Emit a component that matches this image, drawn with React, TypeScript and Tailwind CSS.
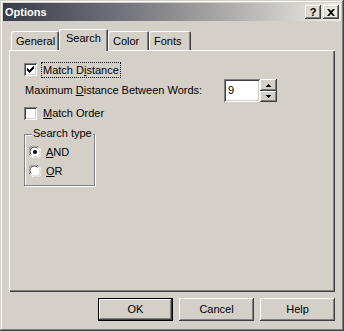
import React from 'react'

const raised =
  'shadow-[inset_-1px_-1px_0_#404040,inset_1px_1px_0_#ffffff,inset_-2px_-2px_0_#808080,inset_2px_2px_0_#d4d0c8]'
const sunken =
  'shadow-[inset_1px_1px_0_#808080,inset_-1px_-1px_0_#ffffff,inset_2px_2px_0_#404040,inset_-2px_-2px_0_#d4d0c8]'

const CheckBox: React.FC<{ checked?: boolean }> = ({ checked }) => (
  <div className={`w-[13px] h-[13px] bg-white shrink-0 flex items-center justify-center ${sunken}`}>
    {checked && (
      <svg width="7" height="7" viewBox="0 0 7 7">
        <path d="M0 2h1v1h1v1h1v-1h1v-1h1v-1h1v-1h1v3h-1v1h-1v1h-1v1h-1v1h-1v-1h-1v-1h-1z" fill="#000" />
      </svg>
    )}
  </div>
)

const Radio: React.FC<{ checked?: boolean }> = ({ checked }) => (
  <svg width="12" height="12" viewBox="0 0 12 12" className="shrink-0">
    <circle cx="6" cy="6" r="5.5" fill="#ffffff" />
    <path d="M1.2 9.5 A5.5 5.5 0 0 1 9.5 1.2" stroke="#808080" strokeWidth="1" fill="none" />
    <path d="M2.3 8.6 A4.3 4.3 0 0 1 8.6 2.3" stroke="#404040" strokeWidth="1" fill="none" />
    <path d="M10.8 2.5 A5.5 5.5 0 0 1 2.5 10.8" stroke="#ffffff" strokeWidth="1" fill="none" />
    <path d="M9.7 3.4 A4.3 4.3 0 0 1 3.4 9.7" stroke="#d4d0c8" strokeWidth="1" fill="none" />
    {checked && <circle cx="6" cy="6" r="2" fill="#000" />}
  </svg>
)

const Btn: React.FC<{ label: string; isDefault?: boolean }> = ({ label, isDefault }) => (
  <div
    className={`w-[75px] h-[23px] flex items-center justify-center text-black ${
      isDefault
        ? 'shadow-[inset_0_0_0_1px_#000000,inset_-2px_-2px_0_#404040,inset_2px_2px_0_#ffffff,inset_-3px_-3px_0_#808080]'
        : raised
    }`}
  >
    {label}
  </div>
)

const tabs = [
  { name: 'General', w: 'w-[48px]' },
  { name: 'Search', w: 'w-[49px]', active: true },
  { name: 'Color', w: 'w-[41px]' },
  { name: 'Fonts', w: 'w-[42px]' },
]

export default function App() {
  return (
    <div className="w-[344px] h-[331px] bg-[#d4d0c8] p-[3px] flex flex-col text-[11px] leading-[13px] font-['Liberation_Sans',Arial,sans-serif] shadow-[inset_-1px_-1px_0_#404040,inset_1px_1px_0_#d4d0c8,inset_-2px_-2px_0_#808080,inset_2px_2px_0_#ffffff]">
      {/* title bar */}
      <div className="h-[18px] flex items-center bg-gradient-to-r from-[#383b4a] via-[#8d8d90] to-[#f1eee6] pl-[2px] pr-[2px]">
        <span className="text-white font-bold flex-1">Options</span>
        <div className="flex gap-[2px]">
          <div className={`w-[16px] h-[14px] flex items-center justify-center font-bold text-[11px] text-black ${raised}`}>
            ?
          </div>
          <div className={`w-[16px] h-[14px] flex items-center justify-center ${raised}`}>
            <svg width="8" height="7" viewBox="0 0 8 7">
              <path d="M0 0h2l2 2 2-2h2L5 3.5 8 7H6L4 5 2 7H0l3-3.5z" fill="#000" />
            </svg>
          </div>
        </div>
      </div>

      {/* tabs */}
      <div className="mt-[8px] mx-[6px] flex flex-col">
        <div className="h-[21px] flex items-end pl-[2px]">
          {tabs.map((t) =>
            t.active ? (
              <div
                key={t.name}
                className={`${t.w} h-[22px] -mb-[1px] relative z-10 bg-[#d4d0c8] rounded-t-[2px] pt-[3px] pl-[7px] shadow-[inset_1px_1px_0_#ffffff,inset_-1px_0_0_#404040,inset_-2px_0_0_#808080]`}
              >
                {t.name}
              </div>
            ) : (
              <div
                key={t.name}
                className={`${t.w} h-[19px] rounded-t-[2px] pt-[4px] pl-[5px] shadow-[inset_1px_1px_0_#ffffff,inset_-1px_0_0_#404040,inset_-2px_0_0_#808080]`}
              >
                {t.name}
              </div>
            )
          )}
        </div>
        <div className="h-[242px] pl-[15px] pt-[12px] shadow-[inset_1px_1px_0_#ffffff,inset_-1px_-1px_0_#404040,inset_-2px_-2px_0_#808080]">
          <div className="flex items-center h-[15px]">
            <CheckBox checked />
            <span className="ml-[4px] px-[1px] h-[16px] leading-[14px] border border-dotted border-black">
              Match D<u>i</u>stance
            </span>
          </div>
          <div className="flex items-center mt-[2px] h-[23px]">
            <span className="ml-[1px] w-[199px]">
              Maximum <u>D</u>istance Between Words:
            </span>
            <div className={`w-[36px] h-[23px] bg-white flex items-center pl-[4px] ${sunken}`}>9</div>
            <div className="flex flex-col">
              <div className={`w-[17px] h-[12px] flex items-center justify-center ${raised}`}>
                <svg width="5" height="3" viewBox="0 0 5 3">
                  <path d="M2 0h1v1h1v1h1v1H0V2h1V1h1z" fill="#000" />
                </svg>
              </div>
              <div className={`w-[17px] h-[11px] flex items-center justify-center ${raised}`}>
                <svg width="5" height="3" viewBox="0 0 5 3">
                  <path d="M0 0h5v1H4v1H3v1H2V2H1V1H0z" fill="#000" />
                </svg>
              </div>
            </div>
          </div>
          <div className="flex items-center mt-[5px] h-[13px]">
            <CheckBox />
            <span className="ml-[6px]">
              <u>M</u>atch Order
            </span>
          </div>
          <div className="mt-[7px] w-[71px]">
            <div className="pl-[8px] h-[13px] flex">
              <span className="bg-[#d4d0c8] px-[1px] relative z-10">Search type</span>
            </div>
            <div className="-mt-[6px] h-[52px] border border-[#808080] shadow-[1px_1px_0_#ffffff,inset_1px_1px_0_#ffffff] pl-[4px] pt-[11px] flex flex-col gap-[7px]">
              <div className="flex items-center h-[12px]">
                <Radio checked />
                <span className="ml-[5px]">
                  <u>A</u>ND
                </span>
              </div>
              <div className="flex items-center h-[12px]">
                <Radio />
                <span className="ml-[5px]">
                  <u>O</u>R
                </span>
              </div>
            </div>
          </div>
        </div>
      </div>

      {/* buttons */}
      <div className="mt-[6px] mr-[6px] flex justify-end gap-[6px]">
        <Btn label="OK" isDefault />
        <Btn label="Cancel" />
        <Btn label="Help" />
      </div>
    </div>
  )
}
